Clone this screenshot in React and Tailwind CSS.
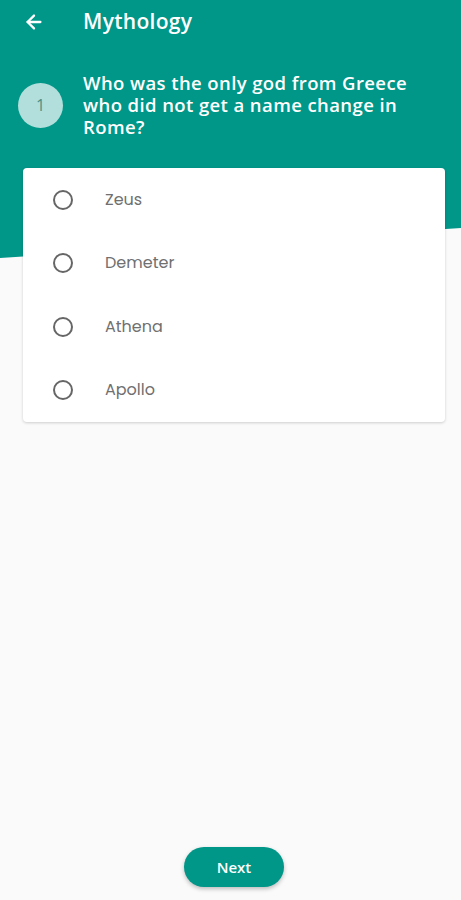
import { ArrowLeft } from "lucide-react";

const options = ["Zeus", "Demeter", "Athena", "Apollo"];

function Option({ label }) {
    return (
        <div className="h-[63.5px] flex items-center">
            <div className="w-[40px] flex justify-center ml-[20px]">
                <span className="w-[20px] h-[20px] rounded-full border-2 border-[#666]" />
            </div>
            <span className="ml-[22px] text-[16px] text-[#707070] font-['Poppins','Lato',sans-serif]">{label}</span>
        </div>
    );
}

export default function App() {
    return (
        <div className="min-h-screen bg-[#fafafa] flex flex-col font-['Open_Sans',sans-serif]">
            {/* teal header with slanted bottom */}
            <div className="h-[258px] bg-[#009688] [clip-path:polygon(0_0,100%_0,100%_228px,0_258px)] text-white">
                <div className="h-[44px] flex items-center">
                    <ArrowLeft className="ml-[23px] w-[22px] h-[22px]" strokeWidth={2.5} />
                    <span className="ml-[38px] text-[21px] tracking-[0.3px] font-semibold">Mythology</span>
                </div>
                <div className="flex items-center mt-[28px] pl-[18px]">
                    <div className="w-[45px] h-[45px] shrink-0 rounded-full bg-[#b2dfdb] flex items-center justify-center text-[#4a8f88] text-[16px]">
                        1
                    </div>
                    <p className="ml-[20px] w-[345px] text-[18.5px] tracking-[0.4px] leading-[22px] font-semibold">
                        Who was the only god from Greece who did not get a name change in Rome?
                    </p>
                </div>
            </div>

            {/* answer card */}
            <div className="relative z-10 -mt-[90px] pl-[23px] pr-[16px]">
                <div className="bg-white rounded-[4px] shadow-[0_1px_3px_rgba(0,0,0,0.18)]">
                    {options.map((o) => (
                        <Option key={o} label={o} />
                    ))}
                </div>
            </div>

            <div className="mt-auto flex justify-center pb-[13px]">
                <button className="ml-[7px] w-[100px] h-[40px] rounded-full bg-[#009688] text-white text-[15px] font-semibold shadow-[0_2px_4px_rgba(0,0,0,0.25)]">
                    Next
                </button>
            </div>
        </div>
    );
}
